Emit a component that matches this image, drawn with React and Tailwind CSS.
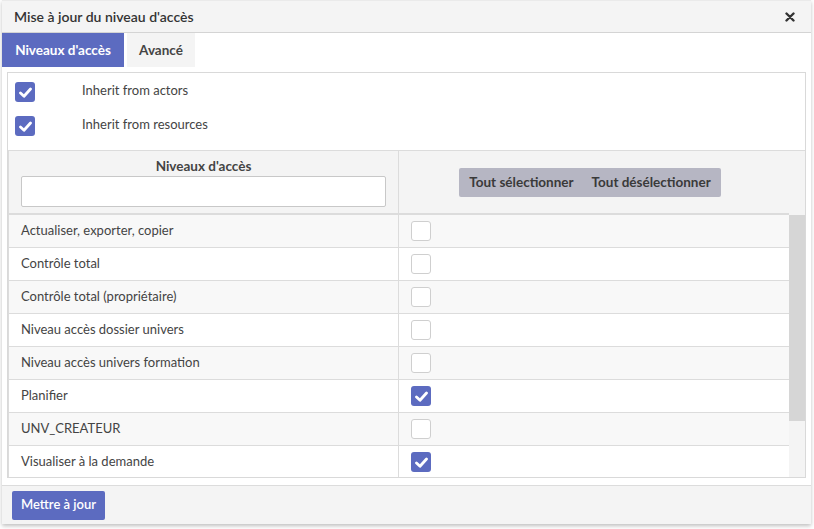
import React from "react";

const font = { fontFamily: '"Lato", "Open Sans", sans-serif' };

function Check({ checked }) {
  if (checked) {
    return (
      <div className="w-[20px] h-[20px] rounded-[3px] bg-[#5c6bc0] flex items-center justify-center shrink-0">
        <svg width="13" height="11" viewBox="0 0 13 11">
          <path d="M1.5 6 L5 9.2 L11.5 2" fill="none" stroke="white" strokeWidth="2.8" strokeLinecap="round" strokeLinejoin="round" />
        </svg>
      </div>
    );
  }
  return <div className="w-[20px] h-[20px] rounded-[3px] bg-white border border-[#cfcfcf] shrink-0" />;
}

const rows = [
  ["Actualiser, exporter, copier", false],
  ["Contrôle total", false],
  ["Contrôle total (propriétaire)", false],
  ["Niveau accès dossier univers", false],
  ["Niveau accès univers formation", false],
  ["Planifier", true],
  ["UNV_CREATEUR", false],
  ["Visualiser à la demande", true],
];

export default function App() {
  return (
    <div className="w-[814px] h-[529px] bg-white overflow-hidden text-[#444]" style={font}>
      <div className="ml-[2px] w-[809px] h-[524px] bg-white flex flex-col shadow-[0_2px_4px_rgba(0,0,0,0.25)] border-t border-[#eaeaea]">
        <div className="h-[32px] shrink-0 bg-[#f4f4f4] border-b border-[#d4d4d4] flex items-center justify-between pl-[12px] pr-[16px]">
          <span className="text-[14px] font-semibold text-[#333]">Mise à jour du niveau d'accès</span>
          <svg width="10" height="10" viewBox="0 0 10 10">
            <path d="M1.5 1.5 L8.5 8.5 M8.5 1.5 L1.5 8.5" stroke="#333" strokeWidth="2.4" strokeLinecap="round" />
          </svg>
        </div>
        <div className="flex gap-[3px] h-[34px] shrink-0">
          <div className="w-[122px] bg-[#5c6bc0] text-white font-bold text-[13.5px] flex items-center justify-center">Niveaux d'accès</div>
          <div className="w-[68px] bg-[#f4f4f4] text-[#444] font-bold text-[13.5px] flex items-center justify-center">Avancé</div>
        </div>
        <div className="mx-[5px] mt-[5px] h-[406px] border border-[#d9d9d9] flex flex-col">
          <div className="pt-[9px] pl-[7px] flex flex-col gap-[14px] h-[77px]">
            <div className="flex items-center">
              <Check checked />
              <span className="ml-[47px] text-[13px] -mt-[3px]">Inherit from actors</span>
            </div>
            <div className="flex items-center">
              <Check checked />
              <span className="ml-[47px] text-[13px] -mt-[3px]">Inherit from resources</span>
            </div>
          </div>
          <div className="flex-1 flex border-t border-[#dcdcdc] min-h-0 border-l">
            <div className="flex-1 flex flex-col min-h-0 overflow-hidden">
              <div className="h-[64px] shrink-0 flex bg-[#f4f4f4] border-b-2 border-[#dcdcdc]">
                <div className="w-[390px] border-r border-[#dcdcdc] flex flex-col items-center pt-[7px]">
                  <span className="text-[13.5px] font-bold text-[#444] leading-[17px]">Niveaux d'accès</span>
                  <div className="mt-[1px] w-[365px] h-[31px] bg-white border border-[#c8c8c8] rounded-[2px]" />
                </div>
                <div className="flex-1 flex items-center justify-center pr-[8px]">
                  <div className="flex bg-[#b6b6c3] rounded-[2px] h-[29px] items-center px-[10px] gap-[18px] text-[13.5px] font-bold text-[#3a3a3a]">
                    <span>Tout sélectionner</span>
                    <span>Tout désélectionner</span>
                  </div>
                </div>
              </div>
              {rows.map(([label, checked], i) => (
                <div key={label} className={`h-[33px] shrink-0 flex border-b border-[#dcdcdc] ${i % 2 === 0 ? "bg-[#f8f8f8]" : "bg-white"}`}>
                  <div className="w-[390px] border-r border-[#dcdcdc] flex items-center pl-[12px] text-[13px] text-[#444]">{label}</div>
                  <div className="flex-1 flex items-center pl-[12px]">
                    <Check checked={checked} />
                  </div>
                </div>
              ))}
            </div>
            <div className="w-[16px] shrink-0 flex flex-col bg-[#f4f4f4]">
              <div className="h-[64px] shrink-0" />
              <div className="h-[206px] bg-[#d6d6d6]" />
            </div>
          </div>
        </div>
        <div className="mt-[7px] flex-1 bg-[#f4f4f4] border-t border-[#dcdcdc] flex items-center pl-[10px]">
          <div className="h-[29px] px-[9px] bg-[#5c6bc0] text-white text-[13px] font-semibold rounded-[2px] flex items-center">Mettre à jour</div>
        </div>
      </div>
    </div>
  );
}
